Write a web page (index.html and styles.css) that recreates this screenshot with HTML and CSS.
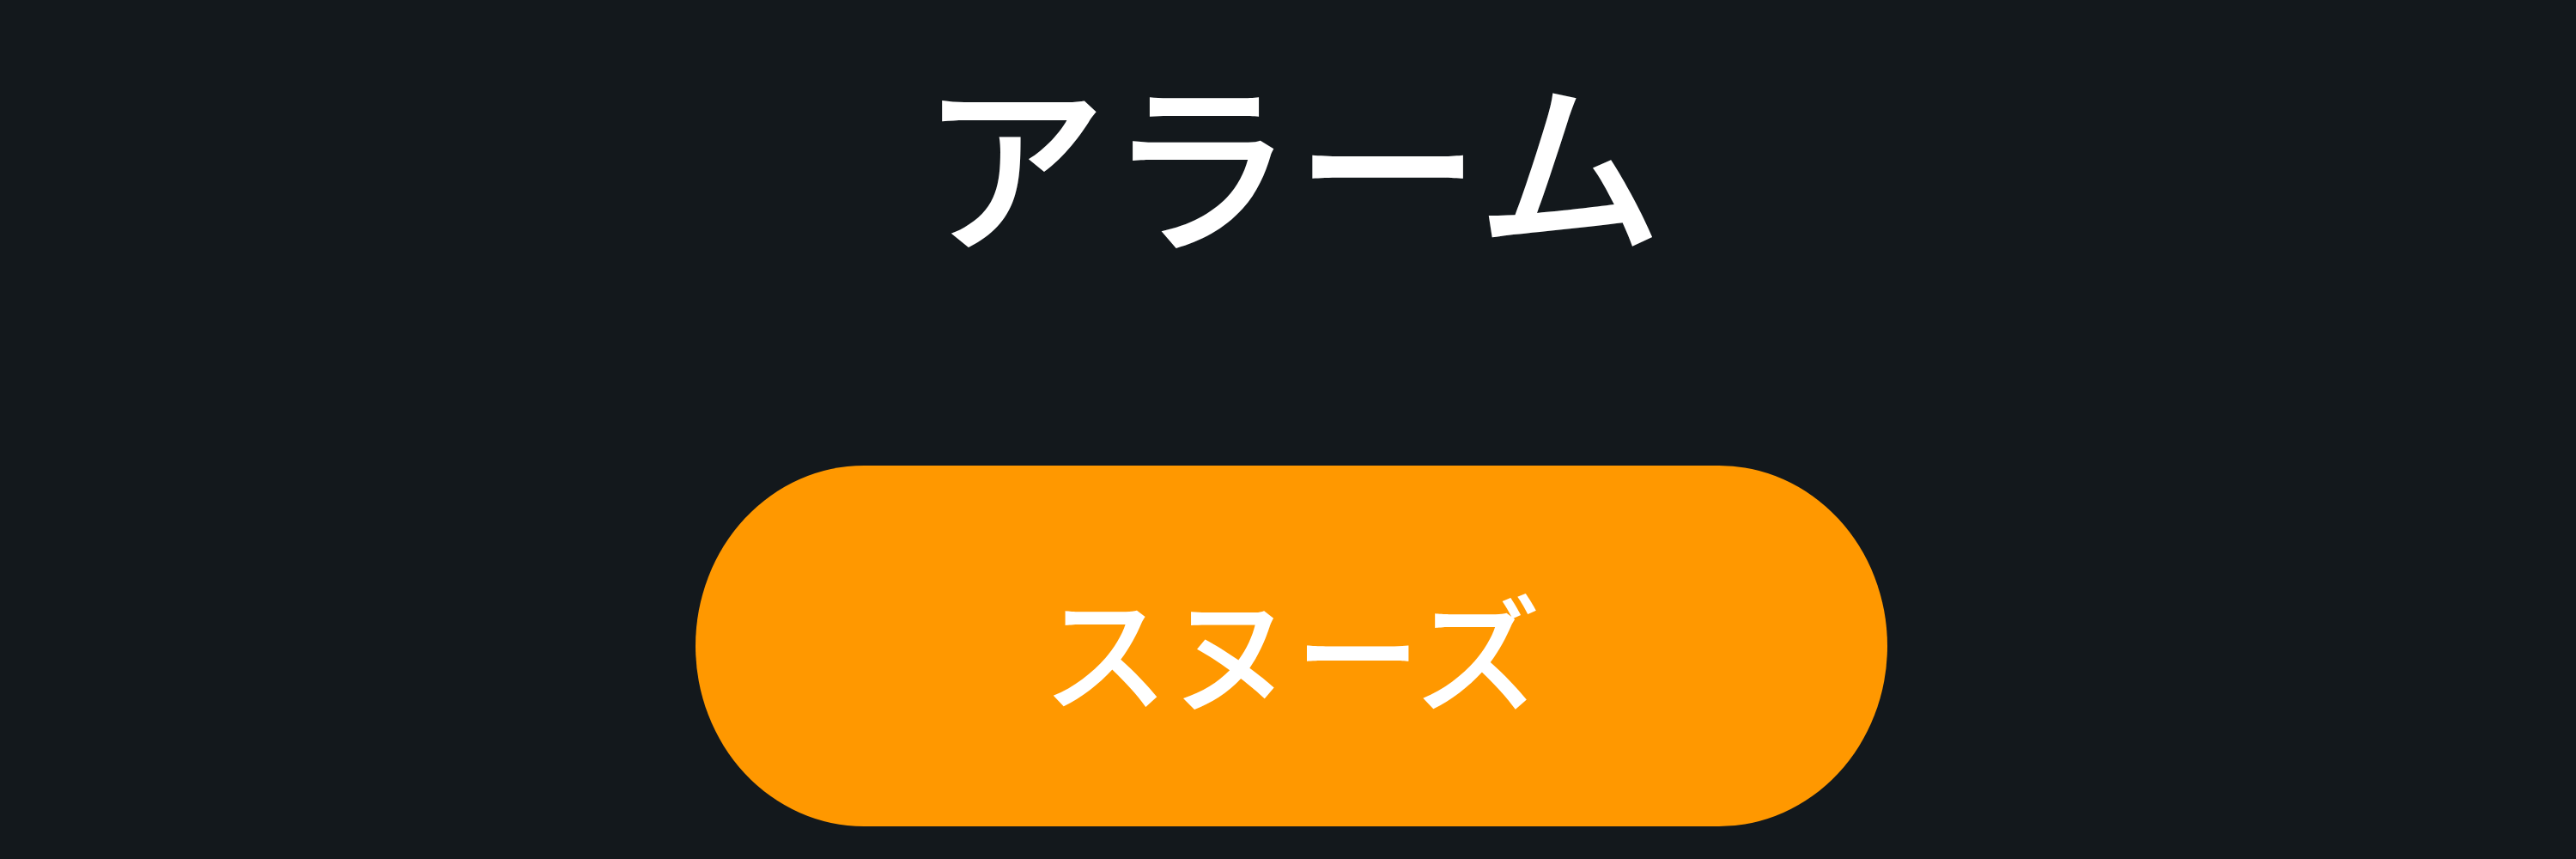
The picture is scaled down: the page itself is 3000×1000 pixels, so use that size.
FILE: index.html
```html
<!DOCTYPE html>
<html lang="ja">
<head>
<meta charset="utf-8">
<title>アラーム</title>
<link rel="stylesheet" href="styles.css">
</head>
<body>
<main class="screen">
  <h1 class="title">アラーム</h1>
  <button class="snooze" type="button">スヌーズ</button>
</main>
</body>
</html>
```
FILE: styles.css
```css
html, body {
  margin: 0;
  padding: 0;
  background: #13181c;
}
body {
  width: 3000px;
  height: 1000px;
  overflow: hidden;
  font-family: "Noto Sans CJK JP", "Noto Sans", sans-serif;
}
.screen {
  display: flex;
  flex-direction: column;
  align-items: center;
  padding-top: 74px;
  padding-left: 8px;
}
.title {
  margin: 0;
  font-size: 218px;
  font-weight: 500;
  line-height: 1;
  color: #ffffff;
  letter-spacing: 0;
}
.snooze {
  margin-top: 250px;
  width: 1388px;
  height: 420px;
  border: none;
  border-radius: 196px / 210px;
  background: #ff9800;
  color: #ffffff;
  font-family: "Noto Sans CJK JP", "Noto Sans", sans-serif;
  font-size: 147px;
  font-weight: 500;
  line-height: 1;
  display: flex;
  align-items: center;
  justify-content: center;
  padding: 0;
}
```
